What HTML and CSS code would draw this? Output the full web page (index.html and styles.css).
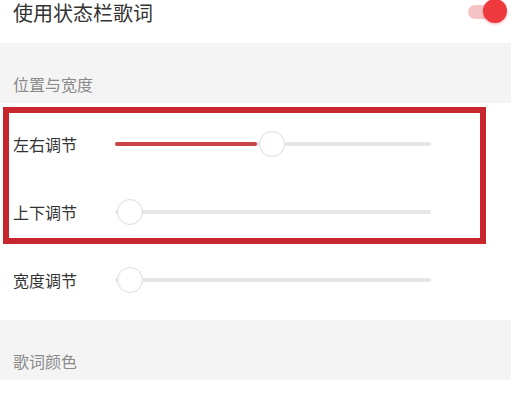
FILE: index.html
```html
<!DOCTYPE html>
<html lang="zh-CN">
<head>
    <meta charset="UTF-8">
    <meta name="viewport" content="width=device-width, initial-scale=1.0">
    <title>状态栏歌词</title>
    <link rel="stylesheet" href="styles.css">
</head>
<body>

<div class="page">
    <div class="switch-row">
        <span class="switch-title">使用状态栏歌词</span>
        <span class="toggle"><span class="toggle-knob"></span></span>
    </div>

    <div class="section-head">位置与宽度</div>

    <div class="slider-list">
        <div class="slider-row">
            <span class="slider-label">左右调节</span>
            <div class="slider">
                <div class="slider-fill" style="width: 45%"></div>
                <div class="slider-thumb" style="left: 45%"></div>
            </div>
        </div>
        <div class="slider-row">
            <span class="slider-label">上下调节</span>
            <div class="slider">
                <div class="slider-fill" style="width: 0%"></div>
                <div class="slider-thumb" style="left: 0%"></div>
            </div>
        </div>
        <div class="slider-row">
            <span class="slider-label">宽度调节</span>
            <div class="slider">
                <div class="slider-fill" style="width: 0%"></div>
                <div class="slider-thumb" style="left: 0%"></div>
            </div>
        </div>
        <div class="highlight"></div>
    </div>

    <div class="section-head">歌词颜色</div>
</div>

</body>
</html>
```

FILE: styles.css
```css
body {
    margin: 0;
    background: #fff;
    font-family: 'Noto Sans CJK SC', 'Noto Sans', sans-serif;
    color: #333;
}
.page {
    width: 511px;
}
.switch-row {
    height: 43px;
    box-sizing: border-box;
    display: flex;
    align-items: flex-start;
    justify-content: space-between;
    padding: 1px 5px 0 13px;
}
.switch-title {
    font-size: 20px;
    line-height: 24px;
    color: #333;
}
.toggle {
    position: relative;
    width: 38px;
    height: 14px;
    margin-top: 4px;
    border-radius: 7px;
    background: #f7c4c6;
}
.toggle-knob {
    position: absolute;
    right: -1px;
    top: -6px;
    width: 24px;
    height: 24px;
    border-radius: 50%;
    background: #ee3a3f;
    box-shadow: 0 1px 3px rgba(200, 30, 30, 0.35);
}
.section-head {
    background: #f4f4f4;
    height: 60px;
    box-sizing: border-box;
    padding: 30px 13px 0;
    font-size: 16px;
    line-height: 22px;
    color: #8a8a8a;
}
.slider-list {
    position: relative;
    padding: 7px 0 6px;
}
.slider-row {
    height: 68px;
    display: flex;
    align-items: center;
    padding-left: 13px;
}
.slider-label {
    width: 102px;
    font-size: 16px;
    line-height: 22px;
    color: #333;
}
.slider {
    position: relative;
    width: 316px;
    height: 4px;
    border-radius: 2px;
    background: #e6e6e6;
}
.slider-fill {
    height: 100%;
    border-radius: 2px;
    background: #c94446;
}
.slider-thumb {
    position: absolute;
    top: 50%;
    width: 26px;
    height: 26px;
    margin: -13px 0 0 2px;
    box-sizing: border-box;
    border-radius: 50%;
    border: 1px solid #dcdcdc;
    background: #fff;
}
.highlight {
    position: absolute;
    left: 3px;
    top: 4px;
    width: 483px;
    height: 137px;
    box-sizing: border-box;
    border: 6px solid #c8262f;
}
```
